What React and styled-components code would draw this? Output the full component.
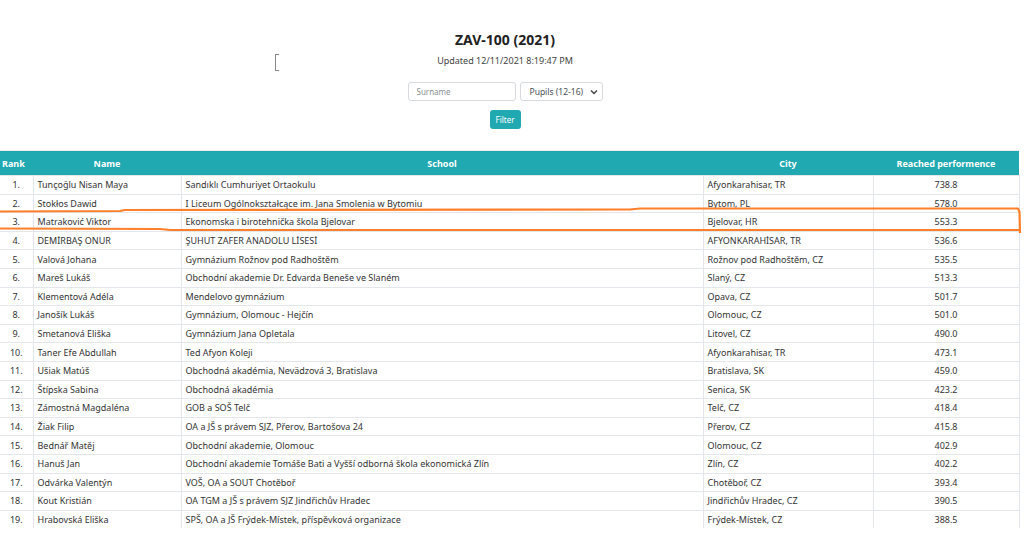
import styled, { createGlobalStyle } from 'styled-components';

const rows = [
  ['Tunçoğlu Nisan Maya', 'Sandıklı Cumhuriyet Ortaokulu', 'Afyonkarahisar, TR', '738.8'],
  ['Stokłos Dawid', 'I Liceum Ogólnokształcące im. Jana Smolenia w Bytomiu', 'Bytom, PL', '578.0'],
  ['Matraković Viktor', 'Ekonomska i birotehnička škola Bjelovar', 'Bjelovar, HR', '553.3'],
  ['DEMİRBAŞ ONUR', 'ŞUHUT ZAFER ANADOLU LİSESİ', 'AFYONKARAHİSAR, TR', '536.6'],
  ['Valová Johana', 'Gymnázium Rožnov pod Radhoštěm', 'Rožnov pod Radhoštěm, CZ', '535.5'],
  ['Mareš Lukáš', 'Obchodní akademie Dr. Edvarda Beneše ve Slaném', 'Slaný, CZ', '513.3'],
  ['Klementová Adéla', 'Mendelovo gymnázium', 'Opava, CZ', '501.7'],
  ['Janošík Lukáš', 'Gymnázium, Olomouc - Hejčín', 'Olomouc, CZ', '501.0'],
  ['Smetanová Eliška', 'Gymnázium Jana Opletala', 'Litovel, CZ', '490.0'],
  ['Taner Efe Abdullah', 'Ted Afyon Koleji', 'Afyonkarahisar, TR', '473.1'],
  ['Ušiak Matúš', 'Obchodná akadémia, Nevädzová 3, Bratislava', 'Bratislava, SK', '459.0'],
  ['Štípska Sabina', 'Obchodná akadémia', 'Senica, SK', '423.2'],
  ['Zámostná Magdaléna', 'GOB a SOŠ Telč', 'Telč, CZ', '418.4'],
  ['Žiak Filip', 'OA a JŠ s právem SJZ, Přerov, Bartošova 24', 'Přerov, CZ', '415.8'],
  ['Bednář Matěj', 'Obchodní akademie, Olomouc', 'Olomouc, CZ', '402.9'],
  ['Hanuš Jan', 'Obchodní akademie Tomáše Bati a Vyšší odborná škola ekonomická Zlín', 'Zlín, CZ', '402.2'],
  ['Odvárka Valentýn', 'VOŠ, OA a SOUT Chotěboř', 'Chotěboř, CZ', '393.4'],
  ['Kout Kristián', 'OA TGM a JŠ s právem SJZ Jindřichův Hradec', 'Jindřichův Hradec, CZ', '390.5'],
  ['Hrabovská Eliška', 'SPŠ, OA a JŠ Frýdek-Místek, příspěvková organizace', 'Frýdek-Místek, CZ', '388.5'],
];

const GlobalStyle = createGlobalStyle`
  body {
    margin: 0;
    background: #fff;
    font-family: "Noto Sans", "Open Sans", sans-serif;
    color: #212529;
  }
`;

const Page = styled.div`
  position: relative;
  width: 1024px;
  height: 557px;
  overflow: hidden;
`;

const Header = styled.header`
  display: flex;
  flex-direction: column;
  align-items: center;
  padding-top: 30px;
  padding-right: 14px;
`;

const Title = styled.h1`
  margin: 0;
  font-size: 14px;
  line-height: 20px;
  font-weight: 700;
  color: #222;
`;

const Updated = styled.div`
  margin-top: 4px;
  font-size: 9px;
  line-height: 14px;
  color: #444;
`;

const Cursor = styled.span`
  position: absolute;
  left: 275px;
  top: 54px;
  width: 3px;
  height: 15px;
  border: 1px solid #888;
  border-right: none;
`;

const FilterRow = styled.div`
  display: flex;
  gap: 4px;
  margin-top: 14px;
`;

const Input = styled.input`
  width: 108px;
  height: 19px;
  box-sizing: border-box;
  border: 1px solid #d7dbe0;
  border-radius: 3px;
  padding: 0 8px;
  font-family: inherit;
  font-size: 8px;
  color: #495057;
  &::placeholder { color: #8a8f95; }
`;

const Select = styled.div`
  width: 83px;
  height: 19px;
  box-sizing: border-box;
  border: 1px solid #d7dbe0;
  border-radius: 3px;
  display: flex;
  align-items: center;
  justify-content: space-between;
  padding: 0 4px 0 9px;
  font-size: 8.5px;
  color: #495057;
`;

const Button = styled.button`
  margin-top: 9px;
  width: 31px;
  height: 19px;
  border: none;
  border-radius: 3px;
  background: #20a9b1;
  color: #fff;
  font-family: inherit;
  font-size: 8px;
  padding: 0;
`;

const TableWrap = styled.div`
  margin-top: 21px;
  width: 1019px;
`;

const Table = styled.table`
  width: 1019px;
  border-collapse: collapse;
  table-layout: fixed;
  font-size: 9px;
`;

const Th = styled.th`
  background: #20a9b1;
  color: #fff;
  font-weight: 700;
  height: 24px;
  padding: 0 2px;
  text-align: ${({ $align }) => $align || 'center'};
  border-top: 1px solid #e8eaec;
`;

const Td = styled.td`
  height: 17.6px;
  padding: 0 4px;
  border: 1px solid #e3e6ea;
  text-align: ${({ $align }) => $align || 'left'};
  white-space: nowrap;
  overflow: hidden;
  color: #333;
  &:first-child { border-left: none; }
  tr:last-child > & { border-bottom: none; }
`;

const Mark = styled.svg`
  position: absolute;
  left: 0;
  top: 0;
  pointer-events: none;
`;

export default function App() {
  return (
    <Page>
      <GlobalStyle />
      <Cursor />
      <Header>
        <Title>ZAV-100 (2021)</Title>
        <Updated>Updated 12/11/2021 8:19:47 PM</Updated>
        <FilterRow>
          <Input placeholder="Surname" />
          <Select>
            <span>Pupils (12-16)</span>
            <svg width="8" height="6" viewBox="0 0 8 6">
              <path d="M1 1.5 L4 4.5 L7 1.5" fill="none" stroke="#444" strokeWidth="1.4" />
            </svg>
          </Select>
        </FilterRow>
        <Button>Filter</Button>
      </Header>
      <TableWrap>
        <Table>
          <colgroup>
            <col style={{ width: 33 }} />
            <col style={{ width: 148 }} />
            <col style={{ width: 522 }} />
            <col style={{ width: 170 }} />
            <col style={{ width: 146 }} />
          </colgroup>
          <thead>
            <tr>
              <Th $align="left">Rank</Th>
              <Th>Name</Th>
              <Th>School</Th>
              <Th>City</Th>
              <Th>Reached performence</Th>
            </tr>
          </thead>
          <tbody>
            {rows.map((r, i) => (
              <tr key={i}>
                <Td $align="center">{i + 1}.</Td>
                <Td>{r[0]}</Td>
                <Td>{r[1]}</Td>
                <Td>{r[2]}</Td>
                <Td $align="center">{r[3]}</Td>
              </tr>
            ))}
          </tbody>
        </Table>
      </TableWrap>
      <Mark width="1024" height="557">
        <path
          d="M0 211.5 L120 211 L125 210 L630 209.5 L640 208.5 L1018 208.5 L1019.5 212 L1020 233"
          fill="none" stroke="#ff7f2a" strokeWidth="2.2" strokeLinejoin="round"
        />
        <path
          d="M0 228.5 L160 229 L170 230 L1019 230"
          fill="none" stroke="#ff7f2a" strokeWidth="2.2" strokeLinejoin="round"
        />
      </Mark>
    </Page>
  );
}
